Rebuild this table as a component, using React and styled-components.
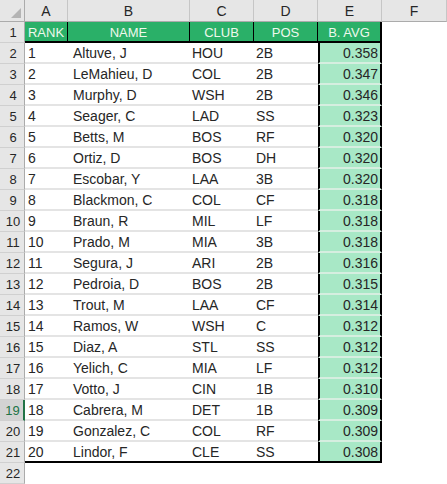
import React from 'react';
import styled, { createGlobalStyle, css } from 'styled-components';

const GlobalStyle = createGlobalStyle`
  html, body {
    margin: 0;
    padding: 0;
    background: #fff;
  }
  body {
    font-family: "Liberation Sans", Arial, sans-serif;
  }
`;

const Sheet = styled.div`
  display: grid;
  grid-template-columns: 25px 43px 122px 64px 64px 64px 65px;
  grid-template-rows: 22px;
  grid-auto-rows: 21px;
  width: 447px;
  height: 484px;
  overflow: hidden;
  background: #fff;
`;

const Corner = styled.div`
  position: relative;
  background: #e6e6e6;
  border-right: 1px solid #ababab;
  border-bottom: 1px solid #ababab;
  box-sizing: border-box;
`;

const CornerTri = styled.svg`
  position: absolute;
  right: 3px;
  bottom: 3px;
`;

const ColHead = styled.div`
  display: flex;
  align-items: center;
  justify-content: center;
  background: #e6e6e6;
  border-right: 1px solid #c6c6c6;
  border-bottom: 1px solid #ababab;
  box-sizing: border-box;
  font-size: 14px;
  color: #262626;
  padding-top: 1px;
`;

const RowHead = styled.div`
  display: flex;
  align-items: center;
  justify-content: center;
  background: ${p => (p.$active ? '#d3d3d3' : '#e6e6e6')};
  border-right: ${p => (p.$active ? '2px solid #217346' : '1px solid #ababab')};
  border-bottom: 1px solid #d0d0d0;
  box-sizing: border-box;
  font-size: 13px;
  color: ${p => (p.$active ? '#217346' : '#262626')};
  padding-left: 2px;
`;

const HeadCell = styled.div`
  display: flex;
  align-items: center;
  justify-content: center;
  background: #2ab068;
  color: #eef8ec;
  font-size: 13px;
  box-sizing: border-box;
  border-bottom: 2px solid #000;
  border-right: ${p => (p.$last ? '2px solid #000' : '1px solid #000')};
  padding-top: 2px;
`;

const Cell = styled.div`
  display: flex;
  align-items: center;
  justify-content: ${p => (p.$right ? 'flex-end' : 'flex-start')};
  box-sizing: border-box;
  font-size: 14px;
  color: #262626;
  padding-left: ${p => p.$pad || 3}px;
  padding-right: ${p => (p.$right ? 2 : 0)}px;
  padding-top: 1px;
  background: #fff;
  border-bottom: ${p => (p.$lastRow ? '2px solid #000' : '2px solid #e4e4e4')};
  ${p => p.$avg && css`
    background: #a8e8c6;
    border-left: 2px solid #000;
    border-right: 2px solid #000;
    border-bottom: ${p.$lastRow ? '2px solid #000' : '2px solid #d6eee0'};
  `}
`;

const Blank = styled.div`
  background: #fff;
`;

const columns = ['A', 'B', 'C', 'D', 'E', 'F'];
const headers = ['RANK', 'NAME', 'CLUB', 'POS', 'B. AVG'];

const players = [
  [1, 'Altuve, J', 'HOU', '2B', '0.358'],
  [2, 'LeMahieu, D', 'COL', '2B', '0.347'],
  [3, 'Murphy, D', 'WSH', '2B', '0.346'],
  [4, 'Seager, C', 'LAD', 'SS', '0.323'],
  [5, 'Betts, M', 'BOS', 'RF', '0.320'],
  [6, 'Ortiz, D', 'BOS', 'DH', '0.320'],
  [7, 'Escobar, Y', 'LAA', '3B', '0.320'],
  [8, 'Blackmon, C', 'COL', 'CF', '0.318'],
  [9, 'Braun, R', 'MIL', 'LF', '0.318'],
  [10, 'Prado, M', 'MIA', '3B', '0.318'],
  [11, 'Segura, J', 'ARI', '2B', '0.316'],
  [12, 'Pedroia, D', 'BOS', '2B', '0.315'],
  [13, 'Trout, M', 'LAA', 'CF', '0.314'],
  [14, 'Ramos, W', 'WSH', 'C', '0.312'],
  [15, 'Diaz, A', 'STL', 'SS', '0.312'],
  [16, 'Yelich, C', 'MIA', 'LF', '0.312'],
  [17, 'Votto, J', 'CIN', '1B', '0.310'],
  [18, 'Cabrera, M', 'DET', '1B', '0.309'],
  [19, 'Gonzalez, C', 'COL', 'RF', '0.309'],
  [20, 'Lindor, F', 'CLE', 'SS', '0.308'],
];

function App() {
  return (
    <>
      <GlobalStyle />
      <Sheet>
        <Corner>
          <CornerTri width="10" height="10" viewBox="0 0 10 10">
            <polygon points="10,0 10,10 0,10" fill="#b4b4b4" />
          </CornerTri>
        </Corner>
        {columns.map(c => <ColHead key={c}>{c}</ColHead>)}

        <RowHead>1</RowHead>
        {headers.map((h, i) => (
          <HeadCell key={h} $last={i === headers.length - 1}>{h}</HeadCell>
        ))}
        <Blank />

        {players.map((p, i) => {
          const rowNum = i + 2;
          const last = i === players.length - 1;
          return (
            <React.Fragment key={p[0]}>
              <RowHead $active={rowNum === 19}>{rowNum}</RowHead>
              <Cell $lastRow={last} $pad={3}>{p[0]}</Cell>
              <Cell $lastRow={last} $pad={5}>{p[1]}</Cell>
              <Cell $lastRow={last} $pad={2}>{p[2]}</Cell>
              <Cell $lastRow={last} $pad={2}>{p[3]}</Cell>
              <Cell $lastRow={last} $avg $right>{p[4]}</Cell>
              <Blank />
            </React.Fragment>
          );
        })}

        <RowHead>22</RowHead>
      </Sheet>
    </>
  );
}

export default App;
